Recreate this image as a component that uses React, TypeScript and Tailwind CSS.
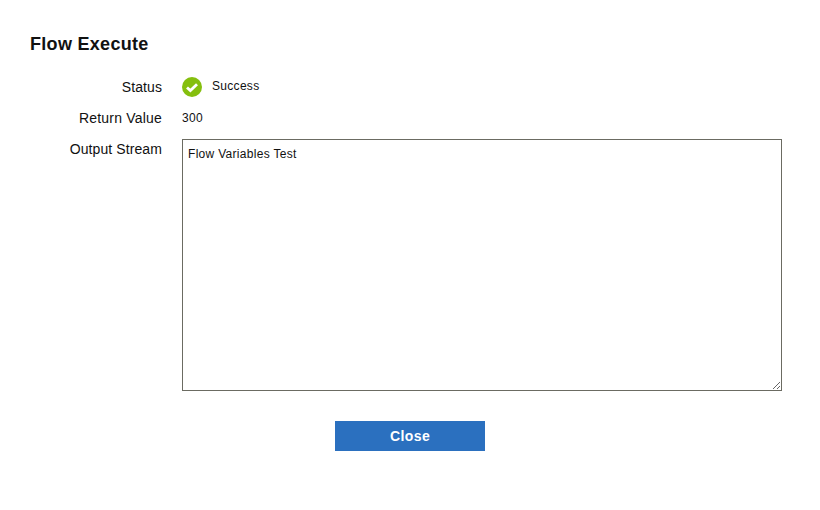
export default function App() {
  return (
    <div className="w-[820px] h-[510px] bg-white font-['Liberation_Sans',Arial,sans-serif] text-[#111] pt-[34px] overflow-hidden">
      <h1 className="pl-[30px] text-[18px] leading-[20px] font-bold tracking-[0.3px]">Flow Execute</h1>

      <div className="mt-[23px] flex flex-col">
        <div className="flex h-[31px]">
          <div className="w-[162px] text-right text-[14px] leading-[20px] tracking-[0.1px]">Status</div>
          <div className="ml-[20px] flex items-start">
            <svg width="20" height="20" viewBox="0 0 20 20" className="block">
              <circle cx="10" cy="10" r="10" fill="#85bf0e" />
              <path d="M5 10.4 L8.4 13.6 L15 7.2" fill="none" stroke="#fff" strokeWidth="2.8" />
            </svg>
            <span className="ml-[10px] text-[12px] leading-[18px] tracking-[0.3px]">Success</span>
          </div>
        </div>
        <div className="flex h-[31px]">
          <div className="w-[162px] text-right text-[14px] leading-[20px] tracking-[0.2px]">Return Value</div>
          <div className="ml-[20px] pt-[1px] text-[12px] leading-[18px] tracking-[0.3px]">300</div>
        </div>
        <div className="flex">
          <div className="w-[162px] text-right text-[14px] leading-[20px] tracking-[0.1px]">Output Stream</div>
          <textarea
            readOnly
            defaultValue="Flow Variables Test"
            className="ml-[20px] block w-[600px] h-[252px] border border-[#6b6b62] px-[5px] py-[7px] text-[12px] leading-[15px] tracking-[0.3px] outline-none resize"
          />
        </div>
      </div>

      <div className="mt-[30px] flex justify-center">
        <button className="w-[150px] h-[30px] bg-[#2b70bf] text-white text-[14px] font-bold tracking-[0.4px]">Close</button>
      </div>
    </div>
  );
}
